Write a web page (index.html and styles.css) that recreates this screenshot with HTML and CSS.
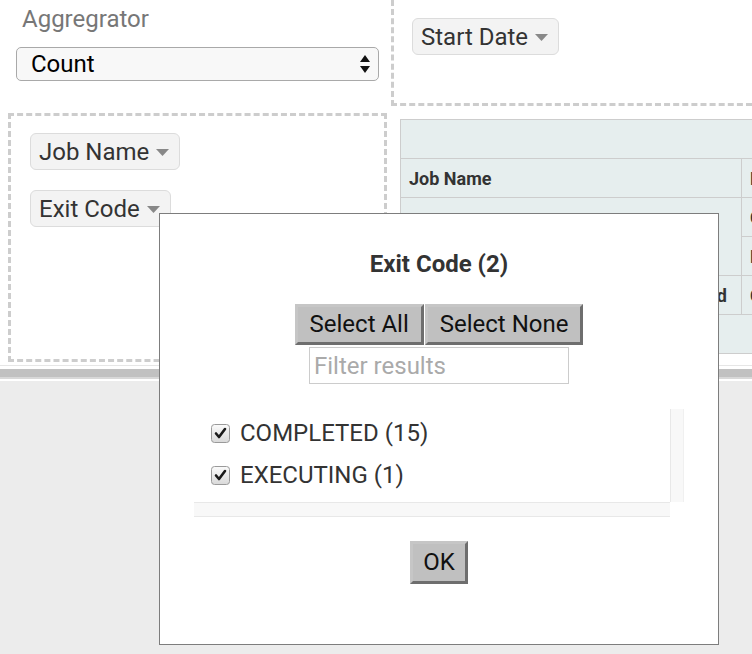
FILE: index.html
```html
<!DOCTYPE html>
<html lang="en">
<head>
<meta charset="utf-8">
<title>Pivot</title>
<link rel="stylesheet" href="styles.css">
</head>
<body>
<div class="page">
  <div class="pivot">
    <div class="agg">
      <div class="agg-label">Aggregrator</div>
      <div class="fake-select">
        <span>Count</span>
        <svg class="sel-arrows" width="10" height="18" viewBox="0 0 10 18"><polygon points="0,7 5,0 10,7" fill="#111"/><polygon points="0,11 10,11 5,18" fill="#111"/></svg>
      </div>
    </div>
    <div class="cols">
      <span class="pill">Start Date<svg class="tri" width="13" height="7" viewBox="0 0 13 7"><polygon points="0,0 13,0 6.5,7" fill="#888"/></svg></span>
    </div>
    <div class="rows-cell">
      <div class="rows-box">
        <span class="pill">Job Name<svg class="tri" width="13" height="7" viewBox="0 0 13 7"><polygon points="0,0 13,0 6.5,7" fill="#888"/></svg></span>
        <span class="pill">Exit Code<svg class="tri" width="13" height="7" viewBox="0 0 13 7"><polygon points="0,0 13,0 6.5,7" fill="#888"/></svg></span>
      </div>
    </div>
    <div class="output">
      <table class="pvt">
        <colgroup><col class="c1"><col class="c2"><col class="c3"></colgroup>
        <tr><th colspan="2"></th><th class="axis">Start Date</th></tr>
        <tr><th class="axis">Job Name</th><th class="axis">Exit Code</th><th></th></tr>
        <tr><th class="rl" rowspan="2">importUserJob</th><th class="rl">COMPLETED</th><td>1</td></tr>
        <tr><th class="rl">EXECUTING</th><td>1</td></tr>
        <tr><th class="rl rl-end">reportGenerationJob-scheduled</th><th class="rl">COMPLETED</th><td>14</td></tr>
        <tr><th colspan="2" class="tot">Totals</th><td>16</td></tr>
      </table>
    </div>
  </div>
  <div class="hscroll"><div class="hthumb"></div></div>
</div>

<div class="modal">
  <h2 class="modal-title">Exit Code (2)</h2>
  <div class="btn-row">
    <button class="btn">Select All</button>
    <button class="btn">Select None</button>
  </div>
  <input class="filter" type="text" placeholder="Filter results">
  <div class="list">
    <div class="list-body">
      <label class="item">
        <svg class="cb" width="19" height="19" viewBox="0 0 19 19"><defs><linearGradient id="g1" x1="0" y1="0" x2="0" y2="1"><stop offset="0" stop-color="#fbfbfb"/><stop offset="1" stop-color="#d9d9d9"/></linearGradient></defs><rect x="0.5" y="0.5" width="18" height="18" rx="3" fill="url(#g1)" stroke="#9a9a9a"/><path d="M5 9.5 L8 13 L14 5" fill="none" stroke="#1a1a1a" stroke-width="2.6" stroke-linecap="round" stroke-linejoin="round"/></svg>
        <span>COMPLETED (15)</span>
      </label>
      <label class="item">
        <svg class="cb" width="19" height="19" viewBox="0 0 19 19"><defs><linearGradient id="g2" x1="0" y1="0" x2="0" y2="1"><stop offset="0" stop-color="#fbfbfb"/><stop offset="1" stop-color="#d9d9d9"/></linearGradient></defs><rect x="0.5" y="0.5" width="18" height="18" rx="3" fill="url(#g2)" stroke="#9a9a9a"/><path d="M5 9.5 L8 13 L14 5" fill="none" stroke="#1a1a1a" stroke-width="2.6" stroke-linecap="round" stroke-linejoin="round"/></svg>
        <span>EXECUTING (1)</span>
      </label>
    </div>
    <div class="vtrack"></div>
    <div class="htrack"></div>
    <div class="corner"></div>
  </div>
  <button class="btn ok">OK</button>
</div>
</body>
</html>
```

FILE: styles.css
```css
html, body {
  margin: 0;
  padding: 0;
}
body {
  width: 752px;
  height: 654px;
  overflow: hidden;
  background: #ececec;
  font-family: "Roboto", "Liberation Sans", sans-serif;
  color: #333;
  position: relative;
}
.page {
  width: 752px;
}
.pivot {
  display: grid;
  grid-template-columns: 391px 361px;
  grid-template-rows: 106px 259px;
  background: #fff;
  overflow: hidden;
}
.agg {
  padding: 5px 0 0 16px;
}
.agg-label {
  font-size: 24px;
  line-height: 28px;
  color: #777;
  margin-left: 6px;
}
.fake-select {
  margin-top: 14px;
  width: 363px;
  height: 34px;
  box-sizing: border-box;
  border: 1px solid #a9a9a9;
  border-radius: 5px;
  background: #f8f8f8;
  display: flex;
  align-items: center;
  justify-content: space-between;
  padding: 0 8px 0 14px;
  font-size: 24px;
  color: #000;
}
.cols {
  border-left: 3px dashed #cdcdcd;
  border-bottom: 3px dashed #cdcdcd;
  padding: 18px 0 0 18px;
}
.pill {
  display: inline-flex;
  align-items: center;
  gap: 7px;
  padding: 4px 10px 3px 8px;
  border: 1px solid #dcdcdc;
  border-radius: 6px;
  background: #f3f3f3;
  font-size: 24px;
  line-height: 28px;
  color: #333;
  white-space: nowrap;
}
.tri {
  display: block;
}
.rows-cell {
  padding: 7px 0 0 8px;
}
.rows-box {
  width: 379px;
  height: 249px;
  box-sizing: border-box;
  border: 3px dashed #cdcdcd;
  padding: 17px 0 0 19px;
  display: flex;
  flex-direction: column;
  align-items: flex-start;
  gap: 20px;
}
.output {
  padding: 13px 0 0 9px;
  overflow: hidden;
}
.pvt {
  border-collapse: collapse;
  table-layout: fixed;
  width: 741px;
  font-size: 18px;
  font-weight: bold;
  color: #333;
}
.c1 { width: 341px; }
.c2 { width: 200px; }
.c3 { width: 200px; }
.pvt th, .pvt td {
  background: #e6eeee;
  border: 1px solid #cdcdcd;
  height: 39px;
  padding: 0 8px;
  text-align: left;
  white-space: nowrap;
  overflow: hidden;
  box-sizing: border-box;
}
.pvt td {
  background: #fff;
  font-weight: normal;
}
.pvt th.rl-end {
  text-align: right;
  padding-right: 14px;
}
.hscroll {
  height: 16px;
  box-sizing: border-box;
  background: #fff;
  border-top: 1px solid #e6e6e6;
  padding-top: 3px;
}
.hthumb {
  height: 8px;
  background: #c1c1c1;
  border-bottom: 2px solid #d8d8d8;
}

/* Modal */
.modal {
  position: absolute;
  left: 159px;
  top: 213px;
  width: 560px;
  height: 432px;
  box-sizing: border-box;
  border: 1px solid #7d7d7d;
  background: #fff;
  display: flex;
  flex-direction: column;
  align-items: center;
}
.modal-title {
  margin: 36px 0 0;
  font-size: 24px;
  line-height: 28px;
  font-weight: bold;
  color: #333;
}
.btn-row {
  display: flex;
  gap: 1px;
  margin-top: 26px;
}
.btn {
  font-family: "Roboto", "Liberation Sans", sans-serif;
  font-size: 24px;
  line-height: 28px;
  color: #111;
  background: #c0c0c0;
  border-style: solid;
  border-width: 3px;
  border-color: #c6c6c6 #6e6e6e #6e6e6e #c6c6c6;
  padding: 3px 12px 4px;
  margin: 0;
  border-radius: 0;
}
.filter {
  margin-top: 2px;
  width: 260px;
  height: 37px;
  box-sizing: border-box;
  border: 1px solid #cccccc;
  padding: 0 4px;
  font-family: "Roboto", "Liberation Sans", sans-serif;
  font-size: 24px;
  color: #333;
  outline: none;
}
.filter::placeholder {
  color: #aaaaaa;
}
.list {
  margin-top: 25px;
  width: 490px;
  height: 108px;
  display: grid;
  grid-template-columns: 476px 14px;
  grid-template-rows: 93px 15px;
}
.list-body {
  padding: 3px 0 0 17px;
}
.item {
  display: flex;
  align-items: center;
  gap: 10px;
  height: 42px;
  font-size: 24px;
  color: #333;
}
.cb {
  display: block;
  flex: none;
}
.vtrack {
  background: #f8f8f8;
  border-left: 1px solid #e8e8e8;
  border-right: 1px solid #f0f0f0;
}
.htrack {
  background: #f8f8f8;
  border-top: 1px solid #e8e8e8;
  border-bottom: 1px solid #e8e8e8;
}
.corner {
  background: #fff;
}
.ok {
  margin-top: 24px;
  padding: 4px 10px 5px;
}
```
